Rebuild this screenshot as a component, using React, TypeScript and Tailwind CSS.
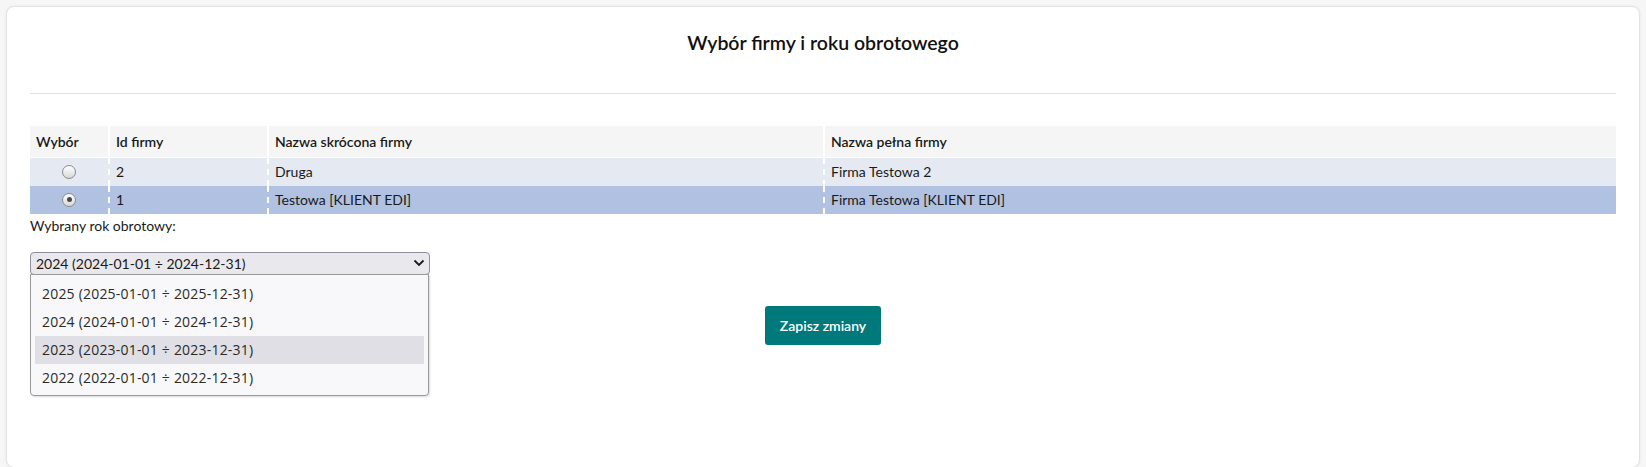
const COMPANIES = [
  { id: 2, short: "Druga", full: "Firma Testowa 2", selected: false },
  { id: 1, short: "Testowa [KLIENT EDI]", full: "Firma Testowa [KLIENT EDI]", selected: true },
];

const YEARS = [
  "2025 (2025-01-01 ÷ 2025-12-31)",
  "2024 (2024-01-01 ÷ 2024-12-31)",
  "2023 (2023-01-01 ÷ 2023-12-31)",
  "2022 (2022-01-01 ÷ 2022-12-31)",
];

function Radio({ checked }: { checked: boolean }) {
  return (
    <span className="flex h-[14px] w-[14px] items-center justify-center rounded-full border border-[#8a8a8a] bg-gradient-to-b from-white to-[#d8d8d8]">
      {checked && <span className="h-[5px] w-[5px] rounded-full bg-[#4a4a4a]" />}
    </span>
  );
}

export default function App() {
  return (
    <div className="min-h-[467px] bg-[#f6f6f6] p-[6px] font-[family-name:Lato,sans-serif] text-[#1a1a1a]">
      <div className="rounded-[8px] border border-[#e3e3e3] bg-white px-[23px] pb-[122px] pt-[22px] shadow-[0_0_3px_rgba(0,0,0,0.06)]">
        <h2 className="text-center text-[19.5px] font-semibold leading-[28px] text-[#111]">
          Wybór firmy i roku obrotowego
        </h2>
        <div className="mt-[36px] h-px bg-[#e1e1e1]" />

        <table className="mt-[32px] w-full border-collapse text-[14px]">
          <thead>
            <tr className="h-[31px] border-b border-white bg-[#f5f5f5] text-left">
              <th className="w-[79px] px-[6px] font-semibold">Wybór</th>
              <th className="w-[159px] border-l-2 border-white px-[6px] font-semibold">Id firmy</th>
              <th className="w-[556px] border-l-2 border-white px-[6px] font-semibold">Nazwa skrócona firmy</th>
              <th className="border-l-2 border-white px-[6px] font-semibold">Nazwa pełna firmy</th>
            </tr>
          </thead>
          <tbody>
            {COMPANIES.map((c) => (
              <tr key={c.id} className={`h-[28px] ${c.selected ? "bg-[#b0c1e1]" : "bg-[#e5e9f2]"}`}>
                <td className="p-0">
                  <div className="flex h-[28px] items-center justify-center">
                    <Radio checked={c.selected} />
                  </div>
                </td>
                <td className="border-l-2 border-dashed border-white px-[6px]">{c.id}</td>
                <td className="border-l-2 border-dashed border-white px-[6px]">{c.short}</td>
                <td className="border-l-2 border-dashed border-white px-[6px]">{c.full}</td>
              </tr>
            ))}
          </tbody>
        </table>

        <div className="mt-[3px] text-[14px] leading-[18px]">Wybrany rok obrotowy:</div>

        <div className="relative mt-[17px] w-[400px]">
          <div className="flex h-[23px] items-center justify-between rounded-[4px] border border-[#8f8f9d] bg-[#e9e9ed] pl-[5px] pr-[4px] text-[14px]">
            <span>2024 (2024-01-01 ÷ 2024-12-31)</span>
            <svg width="12" height="8" viewBox="0 0 12 8" fill="none">
              <path d="M1.5 1.5 L6 6 L10.5 1.5" stroke="#1a1a1a" strokeWidth="1.8" />
            </svg>
          </div>
          <div className="absolute left-0 top-[22px] w-[399px] rounded-b-[4px] border border-[#9a9a9a] bg-[#f8f8fa] px-[4px] pb-[3px] pt-[5px] font-[family-name:'Open_Sans',sans-serif] text-[14px] tracking-[0.2px] text-[#2a2a2a] shadow-[1px_1px_2px_rgba(0,0,0,0.15)]">
            {YEARS.map((y, i) => (
              <div
                key={y}
                className={`flex h-[28px] items-center px-[7px] ${i === 2 ? "bg-[#e0dfe6]" : ""}`}
              >
                {y}
              </div>
            ))}
          </div>
        </div>

        <div className="mt-[31px] flex justify-center">
          <button className="h-[39px] rounded-[3px] bg-[#00797b] px-[15px] text-[14px] font-semibold text-white">
            Zapisz zmiany
          </button>
        </div>
      </div>
    </div>
  );
}
